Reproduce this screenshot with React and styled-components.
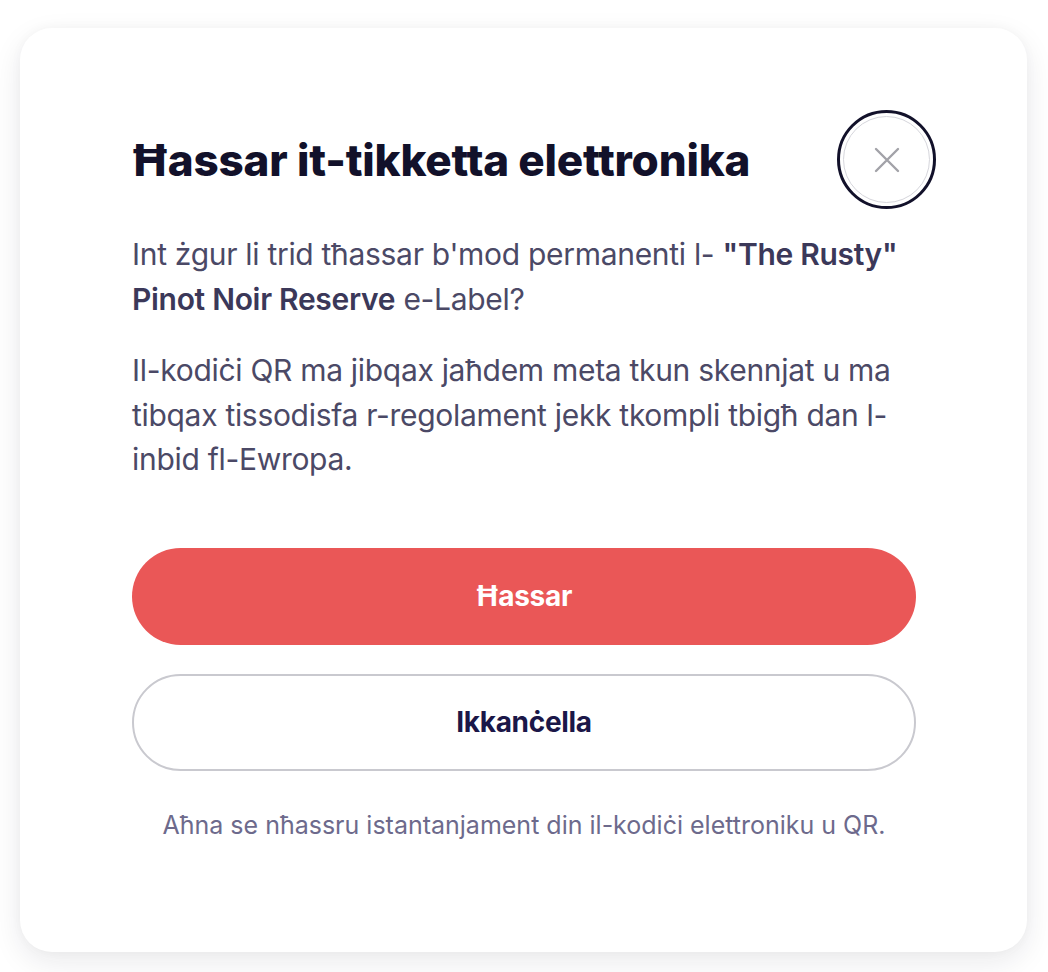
import React from 'react';
import styled, { createGlobalStyle } from 'styled-components';

const GlobalStyle = createGlobalStyle`
  html, body {
    margin: 0;
    padding: 0;
    background: #ffffff;
  }
  body {
    font-family: Inter, "Noto Sans", "Liberation Sans", sans-serif;
    -webkit-font-smoothing: antialiased;
  }
`;

const Page = styled.div`
  padding: 28px 21px 20px 20px;
`;

const Card = styled.div`
  background: #ffffff;
  border-radius: 32px;
  box-shadow: 0 10px 30px rgba(20, 19, 43, 0.09), 0 0 12px rgba(20, 19, 43, 0.03);
  padding: 88px 111px 112px 112px;
`;

const Header = styled.div`
  display: flex;
  align-items: center;
  justify-content: space-between;
  gap: 24px;
  margin-bottom: 29px;
`;

const Title = styled.h2`
  margin: 0;
  font-size: 44px;
  line-height: 52px;
  font-weight: 800;
  letter-spacing: -0.2px;
  color: #12112a;
`;

const CloseButton = styled.button`
  flex: none;
  width: 87px;
  height: 87px;
  margin-right: -14px;
  border-radius: 50%;
  border: 1px solid #d6d6dc;
  background: #ffffff;
  outline: 3px solid #12112a;
  outline-offset: 3px;
  display: flex;
  align-items: center;
  justify-content: center;
  padding: 0;
  cursor: pointer;
`;

const Paragraph = styled.p`
  margin: 0 0 27px;
  font-size: 30px;
  line-height: 44.5px;
  color: #4b4966;
  letter-spacing: -0.3px;

  &:last-of-type {
    margin-bottom: 0;
  }
`;

const Strong = styled.strong`
  font-weight: 600;
  color: #3b3859;
`;

const Actions = styled.div`
  display: flex;
  flex-direction: column;
  gap: 29px;
  margin-top: 66px;
`;

const ActionButton = styled.button`
  height: 97px;
  border-radius: 999px;
  border: ${p => (p.$danger ? 'none' : '2px solid #c9c9cf')};
  background: ${p => (p.$danger ? '#ea5757' : '#ffffff')};
  color: ${p => (p.$danger ? '#ffffff' : '#1b1748')};
  font-family: inherit;
  font-size: 28px;
  font-weight: 700;
  letter-spacing: -0.3px;
  cursor: pointer;
`;

const Footnote = styled.p`
  margin: 39px 0 0;
  text-align: center;
  font-size: 25px;
  line-height: 30px;
  letter-spacing: 0;
  color: #6d6a8c;
`;

const CloseIcon = () => (
  <svg width="26" height="26" viewBox="0 0 26 26" fill="none">
    <path d="M2 2L24 24M24 2L2 24" stroke="#a2a2a8" strokeWidth="2.4" strokeLinecap="round" />
  </svg>
);

export default function App() {
  return (
    <>
      <GlobalStyle />
      <Page>
        <Card>
          <Header>
            <Title>Ħassar it-tikketta elettronika</Title>
            <CloseButton aria-label="Agħlaq">
              <CloseIcon />
            </CloseButton>
          </Header>
          <Paragraph>
            Int żgur li trid tħassar b'mod permanenti l- <Strong>"The Rusty" Pinot Noir Reserve</Strong> e-Label?
          </Paragraph>
          <Paragraph>
            Il-kodiċi QR ma jibqax jaħdem meta tkun skennjat u ma tibqax tissodisfa r-regolament jekk tkompli tbigħ dan l-inbid fl-Ewropa.
          </Paragraph>
          <Actions>
            <ActionButton $danger>Ħassar</ActionButton>
            <ActionButton>Ikkanċella</ActionButton>
          </Actions>
          <Footnote>Aħna se nħassru istantanjament din il-kodiċi elettroniku u QR.</Footnote>
        </Card>
      </Page>
    </>
  );
}
